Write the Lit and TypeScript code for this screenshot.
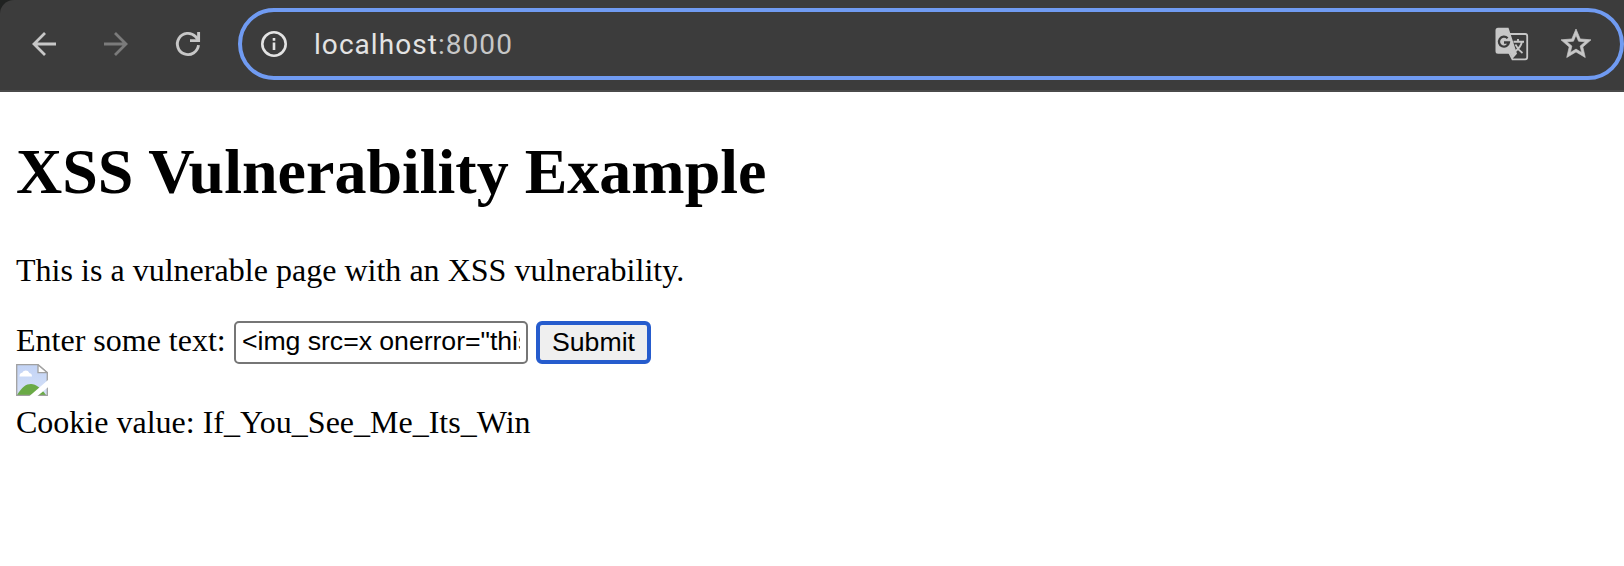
import { LitElement, html, css } from "lit";
import { customElement } from "lit/decorators.js";

@customElement("browser-toolbar")
class BrowserToolbar extends LitElement {
  static styles = css`
    :host { display: block; background: #202221; }
    .bar {
      box-sizing: border-box; height: 92px; display: flex; align-items: flex-start;
      padding: 8px 0 0 26px; background: #3c3c3c; border-bottom: 2px solid #4a4a4a;
      border-top-left-radius: 14px;
    }
    svg { display: block; flex: none; }
    .nav { display: flex; gap: 36px; height: 72px; align-items: center; color: #c7c7c7; }
    .off { color: #7b7b7b; }
    .omni {
      box-sizing: border-box; flex: 1; margin-left: 32px; height: 72px; display: flex;
      align-items: center; border: 4px solid #709bf2; border-radius: 36px;
      padding: 0 26px 0 18px; color: #c7c7c7;
    }
    .url {
      flex: 1; margin-left: 26px; padding-top: 1px; font: 28px/40px Roboto, sans-serif; letter-spacing: 1.05px;
    }
    .host { color: #e3e3e3; }
    .star { margin-left: 29px; }
  `;
  render() {
    return html`<div class="bar">
      <div class="nav">
        <svg width="36" height="36" viewBox="0 0 36 36" fill="none" stroke="currentColor" stroke-width="2.8"><path d="M30 18H8.500M19 7 8 18l11 11"/></svg>
        <svg class="off" width="36" height="36" viewBox="0 0 36 36" fill="none" stroke="currentColor" stroke-width="2.8"><path d="M6 18h21.500M17 7l11 11-11 11"/></svg>
        <svg width="36" height="36" viewBox="0 0 36 36" fill="none" stroke="currentColor" stroke-width="2.9"><path d="M28.500 19.200A10.600 10.600 0 1 1 25.500 10.500L28 13.500"/><path d="M28.600 6v8.600H20"/></svg>
      </div>
      <div class="omni">
        <svg width="28" height="28" viewBox="0 0 28 28" fill="none" stroke="#e3e3e3" stroke-width="2.6"><circle cx="14" cy="14" r="11.700"/><path d="M14 12.500v7.500M14 8v2.700"/></svg>
        <div class="url"><span class="host">localhost</span>:8000</div>
        <svg width="34" height="34" viewBox="0 0 34 34" fill="none"><path d="M15 7h15.200a2 2 0 0 1 2 2v21.300a2 2 0 0 1-2 2H17.500l-4-8" stroke="currentColor" stroke-width="1.800"/><path d="M3 .8h10.500l8.500 26-4.500 5-2-5H3a2.500 2.500 0 0 1-2.500-2.500v-21A2.500 2.500 0 0 1 3 .8z" fill="currentColor"/><path d="M18.500 14.800h10.500M23 12v2.800M27 14.800c-1 4.200-3.500 7.200-7 9.700M20.500 17.500c1.500 3.500 3.800 6.300 7 8.500" stroke="currentColor" stroke-width="1.900"/><path d="M12.600 11.200a5 5 0 1 0 1.300 4.300H9" stroke="#3c3c3c" stroke-width="2.300"/></svg>
        <svg class="star" width="36" height="36" viewBox="0 0 24 24" fill="currentColor" stroke="currentColor" stroke-width=".45"><path d="M22 9.240l-7.190-.62L12 2 9.190 8.630 2 9.240l5.460 4.730L5.820 21 12 17.270 18.180 21l-1.630-7.030L22 9.240zM12 15.400l-3.760 2.270 1-4.280-3.320-2.880 4.380-.38L12 6.100l1.710 4.040 4.380.38-3.320 2.880 1 4.280L12 15.400z"/></svg>
      </div>
    </div>`;
  }
}

@customElement("app-root")
class AppRoot extends LitElement {
  static styles = css`
    :host {
      display: block; height: 566px; overflow: hidden; background: #fff; color: #000;
      font: 32px/36px "Liberation Serif", "Times New Roman", serif;
    }
    .page { padding: 43px 16px 0; }
    h1 { margin: 0; font-size: 64px; line-height: 74px; }
    p { margin: 43px 0 33px; letter-spacing: 0.02px; }
    .form { display: flex; height: 43px; }
    .label { padding-top: 1px; margin-right: 8px; width: 210px; white-space: nowrap; }
    input, button { box-sizing: border-box; margin: 0; height: 43px; color: #000; font: 26.667px/30px "Liberation Sans", Arial, sans-serif; outline: none; }
    input { width: 294px; border: 2px solid #767676; border-radius: 5px; padding: 1px 6px 3px; background: #fff; letter-spacing: -0.04px; }
    button { width: 115px; margin-left: 8px; padding: 0 0 2px; border: 4px solid #265ccd; border-radius: 6px; background: #efefef; }
    .broken { display: block; }
    .cookie { margin-top: 8px; }
  `;
  render() {
    return html`<browser-toolbar></browser-toolbar>
      <div class="page">
        <h1>XSS Vulnerability Example</h1>
        <p>This is a vulnerable page with an XSS vulnerability.</p>
        <div class="form">
          <span class="label">Enter some text:</span>
          <input type="text" .value=${'<img src=x onerror="this'} />
          <button>Submit</button>
        </div>
        <svg class="broken" width="32" height="32" viewBox="0 0 32 32">
          <defs><linearGradient id="sky" x1="0" y1="0" x2="0" y2="1"><stop offset="0" stop-color="#c2d3f5"/><stop offset="1" stop-color="#d6e1f8"/></linearGradient></defs>
          <path d="M.7.700H22L31.300 9v22.300H.7z" fill="url(#sky)"/>
          <path d="M1 31C6 23 10 20 15 20s10 4 15 11z" fill="#6aaa46"/>
          <path d="M3.500 12.500c0-2.500 1-3.500 2.800-3.800C7.500 6 12 5.200 13.300 9c1.800.3 2.700 1.500 2.700 3.500z" fill="#fff"/>
          <path d="M22 .7H.7v30.600h30.600V8.500L22 .7z" fill="none" stroke="#a0a0a0" stroke-width="1.300"/>
          <path d="M22 .7v8h9.300z" fill="#fff" stroke="#a0a0a0" stroke-width="1.300"/>
          <path d="M32 16v7.300L21.500 32H13.500z" fill="#fff"/>
        </svg>
        <div class="cookie">Cookie value: If_You_See_Me_Its_Win</div>
      </div>`;
  }
}
